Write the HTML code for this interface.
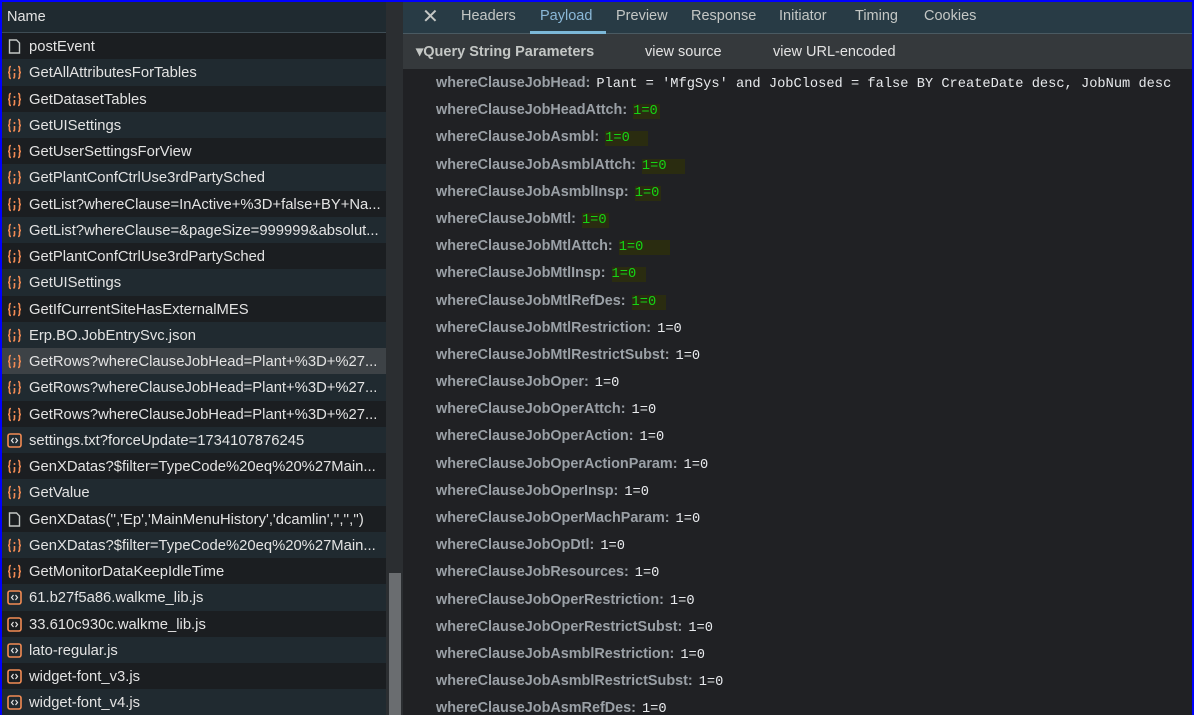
<!DOCTYPE html>
<html><head><meta charset="utf-8"><style>
*{margin:0;padding:0;box-sizing:border-box}
body{width:1194px;height:715px;overflow:hidden;background:#0000ff;font-family:"Liberation Sans",sans-serif;}
#wrap{position:absolute;left:2px;top:2px;width:1190px;height:713px;background:#202124;overflow:hidden}
#left{position:absolute;left:0;top:0;width:384px;height:713px;background:#1b1e21}
#lh{height:31px;background:#1f2a30;border-bottom:1px solid #3e4c54;color:#e3e3e3;font-size:14.5px;line-height:30px;padding-left:5px}
.r{height:26.25px;line-height:28px;font-size:14.8px;color:#e3e3e3;padding-left:27px;position:relative;white-space:nowrap}
.r:nth-child(odd){background:#1b1e21}.r:nth-child(even){background:#202a30}
.r.sel{background:#3d4246}
.ic{position:absolute;left:5px;top:6px;width:15px;height:15px}
#sb{position:absolute;left:384px;top:0;width:17px;height:713px;background:#2b2e31}
#thumb{position:absolute;left:387px;top:571px;width:12px;height:142px;background:#6a6d70}
#right{position:absolute;left:401px;top:0;width:789px;height:713px;background:#202124}
#tabs{height:32px;background:#283b45;border-bottom:1px solid #4a5a62;position:relative;font-size:14.5px;color:#c4c7c5}
#tabs span{position:absolute;top:6px}
#ul{position:absolute;left:127px;top:29px;width:76px;height:3px;background:#7cb8d8}
#qh{height:35px;background:#35393c;position:relative;font-size:14.5px;color:#e3e3e3}
.p{height:27.2px;line-height:29px;padding-left:33px;white-space:nowrap;font-size:14.4px}
.k{color:#9aa0a6;font-weight:bold}
.v{font-family:"Liberation Mono",monospace;color:#e8eaed;margin-left:6px;font-size:13.7px}
.g{color:#16d414;background:#2a2c10;padding:0 2px 0 0}
</style></head><body>
<svg width="0" height="0" style="position:absolute">
<defs>
<symbol id="j" viewBox="0 0 15 15"><g fill="none" stroke="#f28b54" stroke-width="1.6"><path d="M4 1.5C2 1.5 2.5 4 2.5 5.5S1.5 7.5 1 7.5c.5 0 1.5.5 1.5 2s-.5 4 1.5 4"/><path d="M11 1.5c2 0 1.5 2.5 1.5 4s1 2 1.5 2c-.5 0-1.5.5-1.5 2s.5 4-1.5 4"/></g><circle cx="7.5" cy="5" r="1" fill="#f28b54"/><path d="M7.5 8v4l-1 1.5" stroke="#f28b54" stroke-width="1.6" fill="none"/></symbol>
<symbol id="d" viewBox="0 0 15 15"><path d="M2.5 1h7l3 3v10h-10z" fill="none" stroke="#c4c7c5" stroke-width="1.4"/></symbol>
<symbol id="s" viewBox="0 0 15 15"><rect x="1" y="1" width="13" height="13" rx="2" fill="none" stroke="#f28b54" stroke-width="1.6"/><path d="M6.5 5L4.5 7.5 6.5 10M8.5 5l2 2.5-2 2.5" fill="none" stroke="#e3e3e3" stroke-width="1.2"/></symbol>
</defs></svg>
<div id="wrap">
<div id="left">
<div id="lh">Name</div>
<div>
<div class="r"><svg class="ic"><use href="#d"/></svg>postEvent</div>
<div class="r"><svg class="ic"><use href="#j"/></svg>GetAllAttributesForTables</div>
<div class="r"><svg class="ic"><use href="#j"/></svg>GetDatasetTables</div>
<div class="r"><svg class="ic"><use href="#j"/></svg>GetUISettings</div>
<div class="r"><svg class="ic"><use href="#j"/></svg>GetUserSettingsForView</div>
<div class="r"><svg class="ic"><use href="#j"/></svg>GetPlantConfCtrlUse3rdPartySched</div>
<div class="r"><svg class="ic"><use href="#j"/></svg>GetList?whereClause=InActive+%3D+false+BY+Na...</div>
<div class="r"><svg class="ic"><use href="#j"/></svg>GetList?whereClause=&amp;pageSize=999999&amp;absolut...</div>
<div class="r"><svg class="ic"><use href="#j"/></svg>GetPlantConfCtrlUse3rdPartySched</div>
<div class="r"><svg class="ic"><use href="#j"/></svg>GetUISettings</div>
<div class="r"><svg class="ic"><use href="#j"/></svg>GetIfCurrentSiteHasExternalMES</div>
<div class="r"><svg class="ic"><use href="#j"/></svg>Erp.BO.JobEntrySvc.json</div>
<div class="r sel"><svg class="ic"><use href="#j"/></svg>GetRows?whereClauseJobHead=Plant+%3D+%27...</div>
<div class="r"><svg class="ic"><use href="#j"/></svg>GetRows?whereClauseJobHead=Plant+%3D+%27...</div>
<div class="r"><svg class="ic"><use href="#j"/></svg>GetRows?whereClauseJobHead=Plant+%3D+%27...</div>
<div class="r"><svg class="ic"><use href="#s"/></svg>settings.txt?forceUpdate=1734107876245</div>
<div class="r"><svg class="ic"><use href="#j"/></svg>GenXDatas?$filter=TypeCode%20eq%20%27Main...</div>
<div class="r"><svg class="ic"><use href="#j"/></svg>GetValue</div>
<div class="r"><svg class="ic"><use href="#d"/></svg>GenXDatas('','Ep','MainMenuHistory','dcamlin','','','')</div>
<div class="r"><svg class="ic"><use href="#j"/></svg>GenXDatas?$filter=TypeCode%20eq%20%27Main...</div>
<div class="r"><svg class="ic"><use href="#j"/></svg>GetMonitorDataKeepIdleTime</div>
<div class="r"><svg class="ic"><use href="#s"/></svg>61.b27f5a86.walkme_lib.js</div>
<div class="r"><svg class="ic"><use href="#s"/></svg>33.610c930c.walkme_lib.js</div>
<div class="r"><svg class="ic"><use href="#s"/></svg>lato-regular.js</div>
<div class="r"><svg class="ic"><use href="#s"/></svg>widget-font_v3.js</div>
<div class="r"><svg class="ic"><use href="#s"/></svg>widget-font_v4.js</div>
</div></div>
<div id="sb"></div><div id="thumb"></div>
<div id="right">
<div id="tabs">
<span style="left:19px;top:2px;font-size:20px">✕</span>
<span style="left:58px">Headers</span>
<span style="left:137px;color:#8ab8d8">Payload</span>
<span style="left:213px">Preview</span>
<span style="left:288px">Response</span>
<span style="left:376px">Initiator</span>
<span style="left:452px">Timing</span>
<span style="left:521px">Cookies</span>
<div id="ul"></div>
</div>
<div id="qh">
<span style="position:absolute;left:13px;top:10px;font-weight:bold;color:#c4c7c5">▾Query String Parameters</span>
<span style="position:absolute;left:242px;top:10px">view source</span>
<span style="position:absolute;left:370px;top:10px">view URL-encoded</span>
</div>
<div>
<div class="p"><span class="k">whereClauseJobHead:</span><span class="v">Plant = 'MfgSys' and JobClosed = false BY CreateDate desc, JobNum desc</span></div>
<div class="p"><span class="k">whereClauseJobHeadAttch:</span><span class="v g">1=0</span></div>
<div class="p"><span class="k">whereClauseJobAsmbl:</span><span class="v g">1=0&nbsp;&nbsp;</span></div>
<div class="p"><span class="k">whereClauseJobAsmblAttch:</span><span class="v g">1=0&nbsp;&nbsp;</span></div>
<div class="p"><span class="k">whereClauseJobAsmblInsp:</span><span class="v g">1=0</span></div>
<div class="p"><span class="k">whereClauseJobMtl:</span><span class="v g">1=0</span></div>
<div class="p"><span class="k">whereClauseJobMtlAttch:</span><span class="v g">1=0&nbsp;&nbsp;&nbsp;</span></div>
<div class="p"><span class="k">whereClauseJobMtlInsp:</span><span class="v g">1=0&nbsp;</span></div>
<div class="p"><span class="k">whereClauseJobMtlRefDes:</span><span class="v g">1=0&nbsp;</span></div>
<div class="p"><span class="k">whereClauseJobMtlRestriction:</span><span class="v">1=0</span></div>
<div class="p"><span class="k">whereClauseJobMtlRestrictSubst:</span><span class="v">1=0</span></div>
<div class="p"><span class="k">whereClauseJobOper:</span><span class="v">1=0</span></div>
<div class="p"><span class="k">whereClauseJobOperAttch:</span><span class="v">1=0</span></div>
<div class="p"><span class="k">whereClauseJobOperAction:</span><span class="v">1=0</span></div>
<div class="p"><span class="k">whereClauseJobOperActionParam:</span><span class="v">1=0</span></div>
<div class="p"><span class="k">whereClauseJobOperInsp:</span><span class="v">1=0</span></div>
<div class="p"><span class="k">whereClauseJobOperMachParam:</span><span class="v">1=0</span></div>
<div class="p"><span class="k">whereClauseJobOpDtl:</span><span class="v">1=0</span></div>
<div class="p"><span class="k">whereClauseJobResources:</span><span class="v">1=0</span></div>
<div class="p"><span class="k">whereClauseJobOperRestriction:</span><span class="v">1=0</span></div>
<div class="p"><span class="k">whereClauseJobOperRestrictSubst:</span><span class="v">1=0</span></div>
<div class="p"><span class="k">whereClauseJobAsmblRestriction:</span><span class="v">1=0</span></div>
<div class="p"><span class="k">whereClauseJobAsmblRestrictSubst:</span><span class="v">1=0</span></div>
<div class="p"><span class="k">whereClauseJobAsmRefDes:</span><span class="v">1=0</span></div>
</div>
</div>
</div></body></html>
